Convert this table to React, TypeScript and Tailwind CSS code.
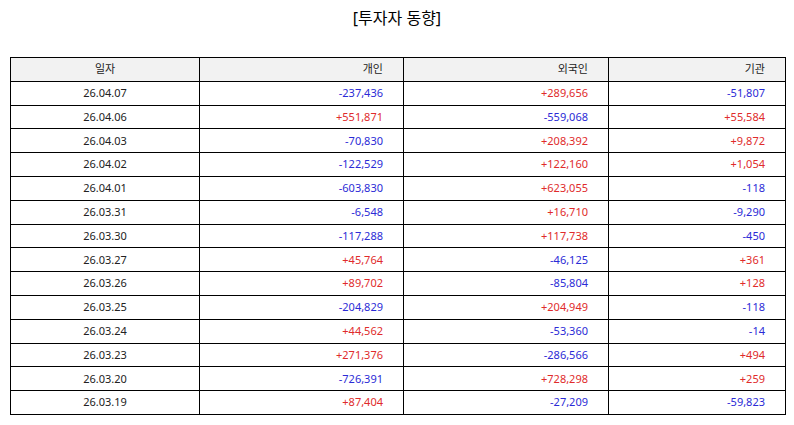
const ROWS: [string, string, string, string][] = [
  ['26.04.07', '-237,436', '+289,656', '-51,807'],
  ['26.04.06', '+551,871', '-559,068', '+55,584'],
  ['26.04.03', '-70,830', '+208,392', '+9,872'],
  ['26.04.02', '-122,529', '+122,160', '+1,054'],
  ['26.04.01', '-603,830', '+623,055', '-118'],
  ['26.03.31', '-6,548', '+16,710', '-9,290'],
  ['26.03.30', '-117,288', '+117,738', '-450'],
  ['26.03.27', '+45,764', '-46,125', '+361'],
  ['26.03.26', '+89,702', '-85,804', '+128'],
  ['26.03.25', '-204,829', '+204,949', '-118'],
  ['26.03.24', '+44,562', '-53,360', '-14'],
  ['26.03.23', '+271,376', '-286,566', '+494'],
  ['26.03.20', '-726,391', '+728,298', '+259'],
  ['26.03.19', '+87,404', '-27,209', '-59,823'],
];

function Num({ v }: { v: string }) {
  const up = v.startsWith('+');
  return (
    <td className={`border-[1.5px] border-black pr-[20px] text-right ${up ? 'text-[#e02b2b]' : 'text-[#2b2bd6]'}`}>{v}</td>
  );
}

export default function App() {
  return (
    <div
      className="h-[425px] w-[794px] bg-white text-[11px] text-[#222]"
      style={{ fontFamily: '"Noto Sans", "Noto Sans CJK KR", sans-serif' }}
    >
      {/* 제목 */}
      <h1 className="pt-[7px] text-center text-[16px] leading-[22px] text-black">[투자자 동향]</h1>

      {/* 표 */}
      <table className="ml-[10px] mt-[28px] w-[775px] table-fixed border-collapse">
        <colgroup>
          <col className="w-[189px]" />
          <col className="w-[204px]" />
          <col className="w-[205px]" />
          <col className="w-[177px]" />
        </colgroup>
        <thead>
          <tr className="h-[23.8px] bg-[#f2f2f2]">
            <th className="border-[1.5px] border-black text-center font-normal">일자</th>
            <th className="border-[1.5px] border-black pr-[20px] text-right font-normal">개인</th>
            <th className="border-[1.5px] border-black pr-[20px] text-right font-normal">외국인</th>
            <th className="border-[1.5px] border-black pr-[20px] text-right font-normal">기관</th>
          </tr>
        </thead>
        <tbody>
          {ROWS.map((r) => (
            <tr key={r[0]} className="h-[23.8px]">
              <td className="border-[1.5px] border-black text-center">{r[0]}</td>
              <Num v={r[1]} />
              <Num v={r[2]} />
              <Num v={r[3]} />
            </tr>
          ))}
        </tbody>
      </table>
    </div>
  );
}
